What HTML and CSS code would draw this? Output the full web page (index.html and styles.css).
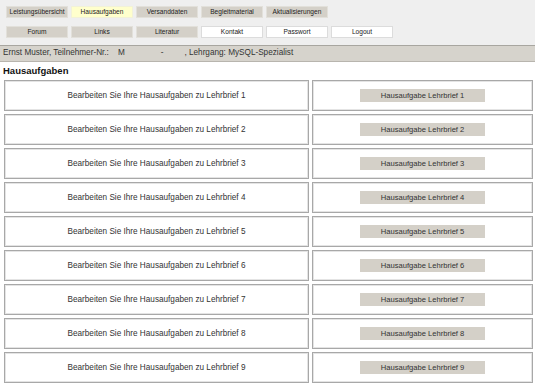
FILE: index.html
```html
<!DOCTYPE html>
<html lang="de">
<head>
  <meta charset="UTF-8">
  <title>Hausaufgaben</title>
  <link rel="stylesheet" href="styles.css">
</head>
<body>

  <div class="top">
    <div class="menu">
      <a href="#">Leistungsübersicht</a>
      <a href="#" class="active">Hausaufgaben</a>
      <a href="#">Versanddaten</a>
      <a href="#">Begleitmaterial</a>
      <a href="#">Aktualisierungen</a>
    </div>
    <div class="menu">
      <a href="#">Forum</a>
      <a href="#">Links</a>
      <a href="#">Literatur</a>
      <a href="#" class="light">Kontakt</a>
      <a href="#" class="light">Passwort</a>
      <a href="#" class="light">Logout</a>
    </div>
  </div>

  <div class="userbar">
    Ernst Muster, Teilnehmer-Nr.:<span class="field nr">M</span><span class="field dash">-</span><span class="field rest">, Lehrgang: MySQL-Spezialist</span>
  </div>

  <h1>Hausaufgaben</h1>

  <div class="tasks">
    <div class="cell">Bearbeiten Sie Ihre Hausaufgaben zu Lehrbrief 1</div>
    <div class="cell"><a href="#" class="btn">Hausaufgabe Lehrbrief 1</a></div>
    <div class="cell">Bearbeiten Sie Ihre Hausaufgaben zu Lehrbrief 2</div>
    <div class="cell"><a href="#" class="btn">Hausaufgabe Lehrbrief 2</a></div>
    <div class="cell">Bearbeiten Sie Ihre Hausaufgaben zu Lehrbrief 3</div>
    <div class="cell"><a href="#" class="btn">Hausaufgabe Lehrbrief 3</a></div>
    <div class="cell">Bearbeiten Sie Ihre Hausaufgaben zu Lehrbrief 4</div>
    <div class="cell"><a href="#" class="btn">Hausaufgabe Lehrbrief 4</a></div>
    <div class="cell">Bearbeiten Sie Ihre Hausaufgaben zu Lehrbrief 5</div>
    <div class="cell"><a href="#" class="btn">Hausaufgabe Lehrbrief 5</a></div>
    <div class="cell">Bearbeiten Sie Ihre Hausaufgaben zu Lehrbrief 6</div>
    <div class="cell"><a href="#" class="btn">Hausaufgabe Lehrbrief 6</a></div>
    <div class="cell">Bearbeiten Sie Ihre Hausaufgaben zu Lehrbrief 7</div>
    <div class="cell"><a href="#" class="btn">Hausaufgabe Lehrbrief 7</a></div>
    <div class="cell">Bearbeiten Sie Ihre Hausaufgaben zu Lehrbrief 8</div>
    <div class="cell"><a href="#" class="btn">Hausaufgabe Lehrbrief 8</a></div>
    <div class="cell">Bearbeiten Sie Ihre Hausaufgaben zu Lehrbrief 9</div>
    <div class="cell"><a href="#" class="btn">Hausaufgabe Lehrbrief 9</a></div>
  </div>

</body>
</html>
```

FILE: styles.css
```css
* { box-sizing: border-box; }

body {
  margin: 0;
  background-color: white;
  color: #222;
  font-family: "Liberation Sans", Arial, sans-serif;
}

a {
  color: #222;
  text-decoration: none;
}

.top {
  background-color: #efefef;
  padding: 6px 0 7px 6px;
  border-bottom: 1px solid #a8a6a0;
}

.menu {
  display: flex;
  gap: 3px;
  margin-bottom: 8px;
}

.menu:last-child {
  margin-bottom: 0;
}

.menu a {
  width: 62px;
  height: 12px;
  line-height: 10px;
  font-size: 6.6px;
  text-align: center;
  background-color: #d4d0c8;
  border: 1px solid #e2e0da;
}

.menu a.active {
  background-color: #ffffcc;
  border-color: #f2f2d8;
}

.menu a.light {
  background-color: white;
  border-color: #dcdcdc;
}

.userbar {
  background-color: #d6d3cc;
  border-bottom: 1px solid #b8b5ae;
  height: 16px;
  line-height: 14px;
  padding-left: 3px;
  font-size: 8.2px;
  color: #333;
}

.field {
  display: inline-block;
}

.nr {
  margin-left: 9px;
}

.dash {
  margin-left: 36px;
}

.rest {
  margin-left: 21px;
}

h1 {
  margin: 3px 3px 3px;
  font-size: 9.5px;
  line-height: 12px;
  color: #111;
}

.tasks {
  display: grid;
  grid-template-columns: 305px 1fr;
  gap: 3px;
  margin: 0 2px 0 4px;
}

.cell {
  height: 31px;
  border: 1px solid #a8a8a8;
  box-shadow: inset 0 0 0 1px #e4e4e4;
  display: flex;
  align-items: center;
  justify-content: center;
  font-size: 8.2px;
  color: #333;
}

.btn {
  width: 125px;
  height: 13px;
  line-height: 13px;
  font-size: 7.6px;
  text-align: center;
  background-color: #d4d0c8;
  color: #333;
}
```
